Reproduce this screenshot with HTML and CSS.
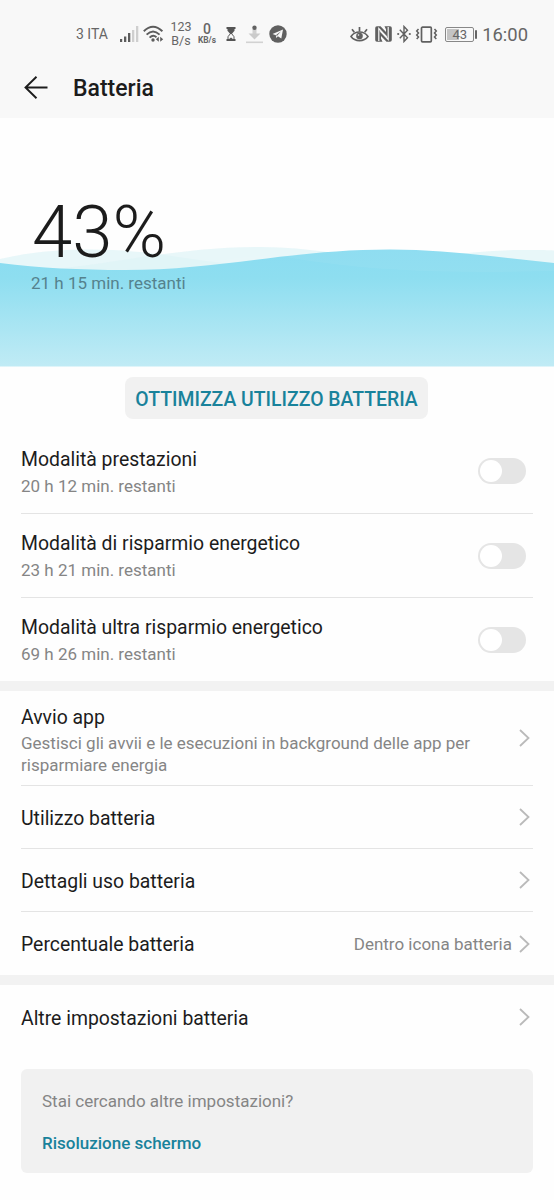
FILE: index.html
```html
<!DOCTYPE html>
<html lang="it">
<head>
<meta charset="utf-8">
<title>Batteria</title>
<link rel="stylesheet" href="styles.css">
</head>
<body>
<header class="top">
  <div class="status">
    <div class="status-left">
      <span class="carrier">3 ITA</span>
      <svg class="signal" width="19" height="18" viewBox="0 0 19 18"><g fill="#5c5c5c"><rect x="0" y="14" width="2.2" height="3"/><rect x="4" y="11.5" width="2.3" height="5.5"/><rect x="8" y="8" width="2.3" height="9"/></g><g fill="#cfcfcf"><rect x="12" y="5" width="2.3" height="12"/><rect x="16" y="1" width="2.3" height="16"/></g></svg>
      <svg class="wifi" width="21" height="18" viewBox="0 0 21 18"><g fill="none" stroke="#5c5c5c" stroke-width="1.9"><path d="M.8 6.3Q10 -2.8 19.4 6.3"/><path d="M3.6 9.6Q10 3.2 16.6 9.6"/><path d="M6.6 12.7Q10 9.2 13.5 12.2"/></g><circle cx="10" cy="15" r="1.7" fill="#5c5c5c"/><path d="M15.8 11.8v5L12.9 14.3zM17.2 11.8v5L20.2 14.3z" fill="#5c5c5c"/></svg>
      <span class="rate">123<br>B/s</span>
      <span class="speed"><b>0</b><small>KB/s</small></span>
      <svg class="hourglass" width="10" height="14" viewBox="0 0 10 14"><path d="M.5 1h9M.5 13h9" stroke="#555" stroke-width="1.8"/><path d="M1.500 1.500h7v2.200L5.800 7H4.200L1.500 3.700z" fill="#555"/><path d="M4.500 6.500L2 9.700V12.300M5.500 6.500L8 9.700V12.300" fill="none" stroke="#555"/><path d="M2.500 12.500L5 10.600l2.500 1.900z" fill="#555"/></svg>
      <svg class="download" width="17" height="19" viewBox="0 0 17 19"><path d="M8.500 4v7" stroke="#d0d0d0" stroke-width="4"/><path d="M2.500 8.500h12L8.500 14.500z" fill="#cbcbcb"/><circle cx="8.500" cy="2.800" r="2.200" fill="#626262"/><path d="M0 17.300h17" stroke="#d2d2d2" stroke-width="1.600"/></svg>
      <svg class="telegram" width="18" height="18" viewBox="0 0 18 18"><circle cx="9" cy="9" r="8.700" fill="#606060"/><path d="M3.500 9L14 4.600 12.300 13.600 8.900 11.200 7.300 12.900 6.900 10.200z" fill="#f8f8f8"/><path d="M6.900 10.200L12 6.300 8.100 10.800z" fill="#606060"/></svg>
    </div>
    <div class="status-right">
      <svg class="eye" width="19" height="17" viewBox="0 0 19 17"><path d="M1 10.500C5 4.500 14 4.500 18 10.500C14 16 5 16 1 10.500z" fill="none" stroke="#606060" stroke-width="1.600"/><circle cx="9.500" cy="10" r="3.300" fill="#606060"/><circle cx="8.500" cy="9" r=".8" fill="#f8f8f8"/><path d="M2 3.200L4.300 6.200M9.500 1v4.500M17 3.200L14.700 6.200" stroke="#606060" stroke-width="1.700"/></svg>
      <svg class="nfc" width="17" height="16" viewBox="0 0 17 16"><path d="M2 .2H5.500L11 6V3.500L9.500 .2H15Q16.800 .2 16.800 2V14Q16.800 15.800 15 15.800H11.500L6 10V12.500L7.500 15.800H2Q.2 15.800 .2 14V2Q.2 .2 2 .2z" fill="#606060"/><path d="M3.800 15V2.500L11.800 10.800M13.200 1V13.500L5.200 5.200" fill="none" stroke="#f8f8f8" stroke-width="1.200"/></svg>
      <svg class="bt" width="14" height="18" viewBox="0 0 14 18"><path d="M2.800 4.800L10.500 12.800 7 16.500V1.500L10.500 5.200 2.800 13.200" fill="none" stroke="#606060" stroke-width="1.400"/><circle cx="1.200" cy="9" r="1.100" fill="#606060"/><circle cx="12.800" cy="9" r="1.100" fill="#606060"/></svg>
      <svg class="vibrate" width="23" height="17" viewBox="0 0 23 17"><rect x="6.500" y="1.200" width="9.800" height="14.600" rx="1" fill="none" stroke="#606060" stroke-width="1.700"/><path d="M3.500 3L1.700 5 3.500 7 1.700 9 3.500 11 1.700 13M19.500 3L21.300 5 19.500 7 21.300 9 19.500 11 21.300 13" fill="none" stroke="#606060" stroke-width="1.500"/></svg>
      <span class="battery"><span>43</span></span>
      <span class="clock">16:00</span>
    </div>
  </div>
  <div class="titlebar">
    <svg width="24" height="24" viewBox="0 0 24 24"><path d="M12.500 .8L1.500 11.500 12.500 22.200M1.500 11.500H23.500" fill="none" stroke="#1c1c1c" stroke-width="1.900"/></svg>
    <h1>Batteria</h1>
  </div>
</header>
<section class="hero">
  <svg class="waves" width="554" height="249" viewBox="0 0 554 249">
    <defs><linearGradient id="water" gradientUnits="userSpaceOnUse" x1="0" y1="131" x2="0" y2="248"><stop offset="0" stop-color="#8adcf1"/><stop offset=".25" stop-color="#8edef0"/><stop offset="1" stop-color="#c0ebf5"/></linearGradient></defs>
    <path d="M0 141C30 134 60 131.500 92 131.500C165 131.500 220 151 310 151C380 151 450 132 520 132C535 132 545 132 554 132.500V248H0z" fill="#def4f6" fill-opacity=".7"/>
    <path d="M0 153.500C90 154 160 129 260 129C340 129 410 154 500 154C522 154 540 154 554 153V248H0z" fill="#def4f6" fill-opacity=".7"/>
    <path d="M0 145C40 150 80 152 125 152C220 152 290 131.500 390 131.500C450 131.500 500 140 554 145V248.500H0z" fill="url(#water)"/>
    <path d="M180 149.500C220 142 250 136 280 138C350 150 400 154 500 154L554 153V145C500 140 450 131.500 390 131.500C310 131.500 250 145 180 149.500z" fill="#fff" fill-opacity=".05"/>
  </svg>
  <div class="percent">43%</div>
  <div class="remaining">21 h 15 min. restanti</div>
</section>
<div class="action"><button class="optimize">OTTIMIZZA UTILIZZO BATTERIA</button></div>
<main>
  <section class="group">
    <div class="row mode"><div><div class="name">Modalità prestazioni</div><div class="sub">20 h 12 min. restanti</div></div><span class="switch"></span></div>
    <div class="row mode"><div><div class="name">Modalità di risparmio energetico</div><div class="sub">23 h 21 min. restanti</div></div><span class="switch"></span></div>
    <div class="row mode"><div><div class="name">Modalità ultra risparmio energetico</div><div class="sub">69 h 26 min. restanti</div></div><span class="switch"></span></div>
  </section>
  <section class="group">
    <div class="row launch"><div><div class="name">Avvio app</div><div class="sub desc">Gestisci gli avvii e le esecuzioni in background delle app per risparmiare energia</div></div><svg class="chevron" width="11" height="18" viewBox="0 0 11 18"><path d="M1 1L9.500 9 1 17"/></svg></div>
    <div class="row link"><div class="name">Utilizzo batteria</div><svg class="chevron" width="11" height="18" viewBox="0 0 11 18"><path d="M1 1L9.500 9 1 17"/></svg></div>
    <div class="row link"><div class="name">Dettagli uso batteria</div><svg class="chevron" width="11" height="18" viewBox="0 0 11 18"><path d="M1 1L9.500 9 1 17"/></svg></div>
    <div class="row link"><div class="name">Percentuale batteria</div><span class="value">Dentro icona batteria</span><svg class="chevron" width="11" height="18" viewBox="0 0 11 18"><path d="M1 1L9.500 9 1 17"/></svg></div>
  </section>
  <section class="group">
    <div class="row link"><div class="name">Altre impostazioni batteria</div><svg class="chevron" width="11" height="18" viewBox="0 0 11 18"><path d="M1 1L9.500 9 1 17"/></svg></div>
  </section>
</main>
<aside class="card">
  <p>Stai cercando altre impostazioni?</p>
  <a>Risoluzione schermo</a>
</aside>
</body>
</html>
```
FILE: styles.css
```css
* { box-sizing: border-box; }
body { margin: 0; width: 554px; height: 1200px; overflow: hidden; background: #fefefe; color: #1c1c1c; font-family: Roboto, sans-serif; }
svg { display: block; flex: none; }
.top { height: 118px; background: #f8f8f8; }
.status { height: 58px; padding: 10px 26px 0 76px; display: flex; justify-content: space-between; color: #666; }
.status-left, .status-right { height: 48px; display: flex; align-items: center; white-space: nowrap; }
.carrier { width: 44px; font-size: 14px; }
.wifi { margin-left: 4px; }
.rate { width: 22px; margin-left: 6px; font-size: 12.5px; line-height: 14px; text-align: center; }
.speed { width: 20px; margin-left: 5px; display: flex; flex-direction: column; align-items: center; }
.speed b { font-size: 14px; line-height: 13px; font-weight: 500; }
.speed small { font-size: 8.4px; line-height: 9px; font-weight: 700; }
.hourglass { margin-left: 9px; }
.download { margin-left: 10px; }
.telegram { margin-left: 6px; }
.nfc { margin-left: 6px; }
.bt { margin-left: 5px; }
.vibrate { margin-left: 4px; }
.battery { position: relative; width: 29px; height: 15px; margin-left: 7px; border: 1px solid #888; border-radius: 2px; display: flex; align-items: center; justify-content: center; background: linear-gradient(#c4c4c4, #c4c4c4) 1px 1px / 12px 11px no-repeat; font-size: 13px; line-height: 13px; }
.battery::after { content: ""; position: absolute; right: -4px; top: 2px; width: 2px; height: 9px; border-radius: 1px; background: #666; }
.clock { margin-left: 8px; padding-top: 1px; font-size: 18.4px; }
.titlebar { height: 60px; padding-left: 24px; display: flex; align-items: center; gap: 25px; }
.titlebar h1 { margin: 0; padding-top: 1px; font-size: 23px; font-weight: 500; line-height: 28px; }
.hero { position: relative; height: 248px; padding: 73px 0 0 31px; }
.waves { position: absolute; left: 0; top: 0; }
.percent, .remaining { position: relative; }
.percent { height: 82px; padding-left: 1px; font-size: 72.5px; font-weight: 300; line-height: 84px; }
.remaining { font-size: 17px; line-height: 20px; color: #55828d; }
.action { height: 63px; padding: 11px 1px 0 0; display: flex; justify-content: center; align-items: flex-start; }
.optimize { width: 303px; height: 42px; padding: 2px 0 0; border: 0; border-radius: 8px; background: #f1f1f1; color: #19829b; font: 500 19.4px Roboto, sans-serif; white-space: nowrap; }
.group + .group { border-top: 10px solid #f2f2f2; }
.row { margin: 0 21px; display: flex; align-items: center; justify-content: space-between; }
.row + .row { border-top: 1px solid #e4e4e4; }
.mode { height: 84px; padding-right: 7px; }
.name { padding-top: 3px; font-size: 19.4px; line-height: 26px; white-space: nowrap; }
.mode .name { padding-top: 1px; }
.sub { margin-top: 2px; font-size: 17px; line-height: 22px; color: #858585; }
.switch { width: 48px; height: 26px; padding: 2px; border-radius: 13px; background: #e5e5e5; }
.switch::before { content: ""; display: block; width: 22px; height: 22px; border-radius: 50%; background: #fff; }
.launch { height: 94px; padding-right: 3px; }
.launch .name { padding-top: 4px; }
.desc { width: 470px; margin-top: 1px; }
.link { height: 63px; padding-right: 3px; }
.link:last-child { height: 64px; }
.value { margin: 0 7px 0 auto; padding-top: 1px; font-size: 17px; color: #858585; }
.chevron { fill: none; stroke: #bababa; stroke-width: 1.8; }
.card { height: 104px; margin: 20px 21px 0; padding: 21px 21px 0; border-radius: 6px; background: #f1f1f1; font-size: 17px; line-height: 22px; }
.card p { margin: 0 0 20px; color: #858585; }
.card a { color: #19829b; font-weight: 500; }
```
